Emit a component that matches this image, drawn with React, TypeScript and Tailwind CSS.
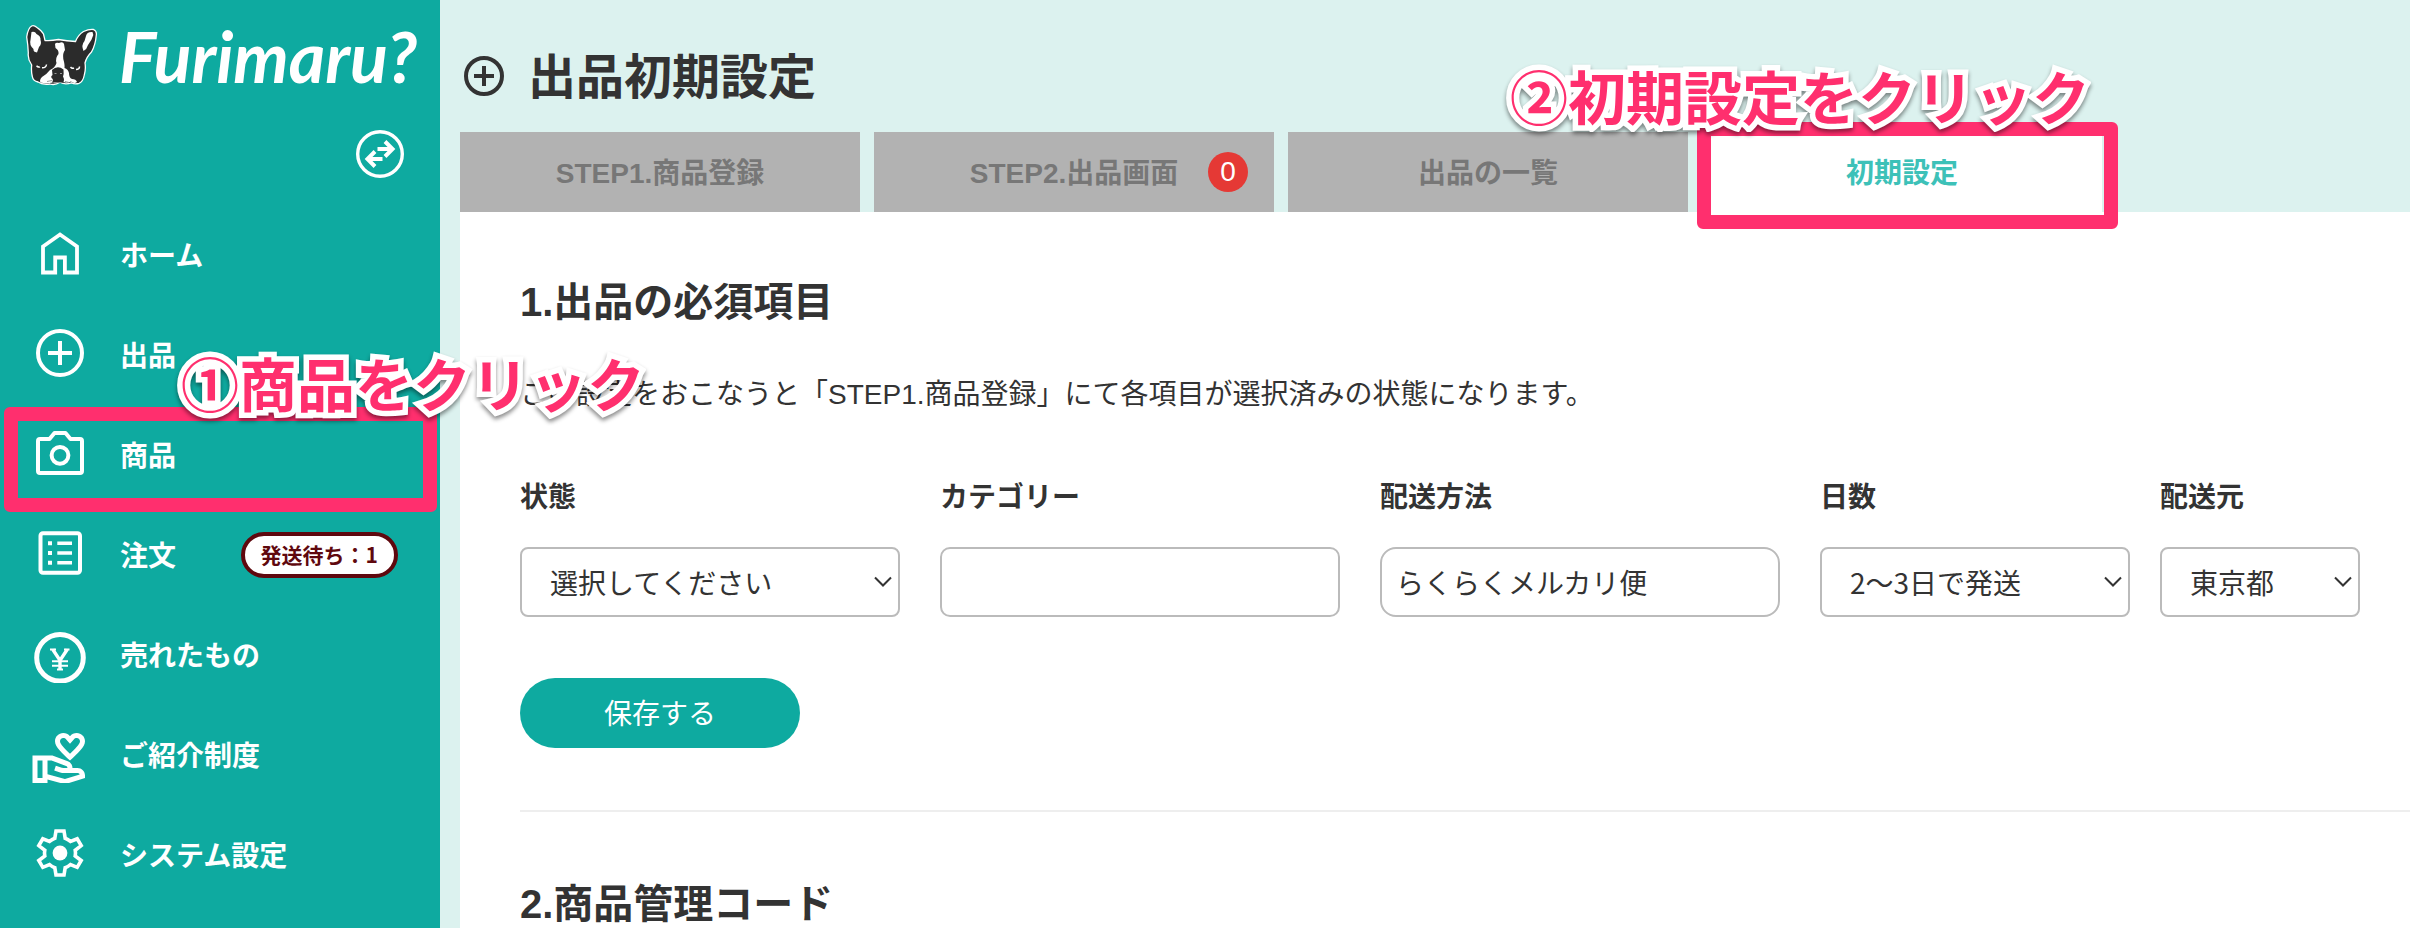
import type { ReactNode } from 'react'
import { MdOutlineVolunteerActivism } from 'react-icons/md'

const ICON_CLASS = 'size-[60px] flex-none fill-none stroke-white'

function HomeIcon() {
  return (
    <svg viewBox="0 0 60 60" className={ICON_CLASS} strokeWidth="3.800" aria-hidden="true">
      <path d="M13 23.500 30 11.500 47 23.500V49.500H34.900V34.500H25.200V49.500H13Z" />
    </svg>
  )
}

function PlusIcon() {
  return (
    <svg viewBox="0 0 60 60" className={ICON_CLASS} strokeWidth="4" aria-hidden="true">
      <circle cx="30" cy="30" r="22" />
      <path d="M30 18V42M18 30H42" />
    </svg>
  )
}

function CameraIcon() {
  return (
    <svg viewBox="0 0 60 60" className={ICON_CLASS} strokeWidth="4" strokeLinejoin="round" aria-hidden="true">
      <path d="M10 16H19.500L24.500 10H35.500L40.500 16H50Q52 16 52 18V48Q52 50 50 50H10Q8 50 8 48V18Q8 16 10 16Z" />
      <circle cx="30" cy="32.300" r="8.400" />
    </svg>
  )
}

function ListIcon() {
  return (
    <svg viewBox="0 0 60 60" className={ICON_CLASS} strokeWidth="4" aria-hidden="true">
      <rect x="10.500" y="10.200" width="39.500" height="39.500" rx="2.500" />
      <path d="M27.300 20.200H42M27.300 30H42M27.300 39.700H42" strokeWidth="3.600" />
      <path d="M18 20.200H22M18 30H22M18 39.700H22" />
    </svg>
  )
}

function YenIcon() {
  return (
    <svg viewBox="0 0 60 60" className={ICON_CLASS} strokeWidth="5" aria-hidden="true">
      <circle cx="30" cy="34.800" r="23.300" />
      <path d="M22.800 26.500 30 37.500 37.200 26.500M30 37V47" strokeWidth="3.400" />
      <path d="M20 26.600H26M34 26.600H39.500M22 38.300H38M22 42.800H38M27 46.500H33" strokeWidth="2" />
    </svg>
  )
}

function GearIcon() {
  return (
    <svg viewBox="0 0 60 60" className={ICON_CLASS} strokeWidth="3.600" aria-hidden="true">
      <path d="M26 8H34L35.200 15.300Q38 16.300 40.500 18.500L47.200 15.800 51.200 22.600 45.200 27.200Q45.800 30 45.200 33L51.200 37.500 47.200 44.300 40.500 41.500Q38 43.700 35.200 44.700L34 52H26L24.800 44.700Q22 43.700 19.500 41.500L12.800 44.300 8.800 37.500 14.800 33Q14.200 30 14.800 27.200L8.800 22.600 12.800 15.800 19.500 18.500Q22 16.300 24.800 15.300Z" />
      <circle cx="30" cy="30" r="7.400" className="fill-white stroke-none" />
    </svg>
  )
}

function DogLogo() {
  return (
    <svg viewBox="0 0 74 62" className="h-[62px] w-[74px] flex-none" aria-hidden="true">
      <path
        d="M6.700 1Q9 0 12 2.500Q17 6 18.500 9L20 15.500Q26 16 33.500 14.500Q42 16 50.500 16.500Q53 10 58.500 6.500Q64 4 68.500 4.500Q72 6 71.300 10Q70.500 20 66.500 27Q61.500 32 60 38Q61 44 59.300 50Q58 57 54 58.300Q50 59.500 46.500 57.800Q40 60 35 57.300Q30 60.500 25 59Q17 60 13 57Q8 56 7.300 51.500Q6 46 6.700 40Q2.500 34 3.300 28Q3 20 1.700 12Q3 3 6.700 1Z"
        fill="#2b2b2b"
        stroke="#fff"
        strokeWidth="1.300"
      />
      <path d="M6.500 7Q10 6 11.500 9Q16 11 15.500 15Q17 19 14 22L12 27.500Q8 27 8.500 24Q4 20 5.500 15Z" fill="#fff" />
      <path d="M67.500 7Q62 6.500 61 11L59.500 16Q56 20 58.500 26Q62 24 63 20Q67 15 68.300 10Z" fill="#fff" />
      <path
        d="M30 19Q31 17 34 18Q38 16 39 19L40 25Q37.500 28 38.300 34Q40 40 39.500 43Q43 44 44 48Q44 53 47 54Q51 54 52 57Q49 59 46 56.500Q41 59 37 56Q32 59 28 57.500Q21 59 15.500 57.500Q14 55 17 52Q21 50 25 45Q30 43 31.500 38Q30 33 33.500 29Q34 25 30.500 23Z"
        fill="#fff"
      />
      <path d="M27 45Q32.500 40 38.500 44.500Q39 49 38 51.500Q40 55 38 57.500H27Q29 54 26.500 53Q25.500 51 27.500 50Z" fill="#2b2b2b" />
      <path d="M29.500 48.500H31.500M35 48.500H37M22 56.500 27 55.500M40 56.500 44 57.500" fill="none" stroke="#999" strokeWidth="1" />
      <path d="M11.500 41Q14 42.500 15 42M17 42.800Q21 43 21.500 39.500M45.500 42Q47 44 49 43M51 44.500Q54.500 44.500 54.500 41.500" fill="none" stroke="#fff" strokeWidth="1.500" />
    </svg>
  )
}

function SwapIcon() {
  return (
    <svg viewBox="0 0 48 48" className="size-12 fill-none stroke-white" aria-hidden="true">
      <circle cx="24" cy="24" r="22.300" strokeWidth="3.400" />
      <path d="M21.500 19H37M29 11.500 36.500 19 29 26.500M26.500 29H11M19 21.500 11.500 29 19 36.500" strokeWidth="4" />
    </svg>
  )
}

const NAV_ITEMS: Array<{ label: string; icon: ReactNode; badge?: string; marked?: boolean }> = [
  { label: 'ホーム', icon: <HomeIcon /> },
  { label: '出品', icon: <PlusIcon /> },
  { label: '商品', icon: <CameraIcon />, marked: true },
  { label: '注文', icon: <ListIcon />, badge: '発送待ち：1' },
  { label: '売れたもの', icon: <YenIcon /> },
  {
    label: 'ご紹介制度',
    icon: <MdOutlineVolunteerActivism viewBox="0 -2 24 24" className="size-[60px] flex-none" aria-hidden="true" />,
  },
  { label: 'システム設定', icon: <GearIcon /> },
]

const TABS: Array<{ label: string; count?: number; active?: boolean }> = [
  { label: 'STEP1.商品登録' },
  { label: 'STEP2.出品画面', count: 0 },
  { label: '出品の一覧' },
  { label: '初期設定', active: true },
]

// Pink guide text with a white outline
function Callout({ text, className }: { text: string; className: string }) {
  return (
    <p
      className={`pointer-events-none absolute z-30 font-['Liberation_Sans','Noto_Sans_CJK_JP',sans-serif] text-[58px] leading-[64px] font-bold whitespace-nowrap text-[#ff2f6e] drop-shadow-[0_3px_2px_rgba(0,0,0,0.45)] [-webkit-text-stroke:11px_white] [paint-order:stroke_fill] [stroke-linejoin:round] ${className}`}
    >
      {text}
    </p>
  )
}

function Sidebar() {
  return (
    <aside className="w-[440px] flex-none bg-[#0eaaa0] font-['Noto_Sans_CJK_JP',sans-serif] text-white">
      <a href="#" className="flex items-center gap-5 pt-[22px] pl-[25px]">
        <DogLogo />
        <span className="font-['Lato'] text-[70px] leading-[68px] font-bold italic">Furimaru?</span>
      </a>
      <div className="flex justify-end pt-10 pr-9">
        <button type="button" aria-label="メニュー切替">
          <SwapIcon />
        </button>
      </div>
      <nav className="pt-[25px]">
        <ul>
          {NAV_ITEMS.map((item) => (
            <li key={item.label} className="relative">
              <a href="#" className="flex h-[100px] items-center pl-[30px]">
                {item.icon}
                <span className="pt-[2px] pl-[30px] text-[28px] font-bold">{item.label}</span>
                {item.badge && (
                  <span className="mt-1 mr-[42px] ml-auto flex h-[46px] items-center rounded-full border-4 border-[#5f080e] bg-white px-4 text-[21px] font-bold text-[#5f080e]">
                    {item.badge}
                  </span>
                )}
              </a>
              {item.marked && (
                <>
                  <span className="pointer-events-none absolute top-1 right-[3px] -bottom-[9px] left-1 z-20 rounded-[6px] border-[14px] border-[#ff2f6e]" />
                  <Callout text="①商品をクリック" className="-top-12 left-[181px]" />
                </>
              )}
            </li>
          ))}
        </ul>
      </nav>
    </aside>
  )
}

function Tabs() {
  return (
    <div role="tablist" className="flex gap-[14px]">
      {TABS.map((tab) => (
        <div key={tab.label} className="relative w-[400px]">
          <button
            type="button"
            role="tab"
            aria-selected={!!tab.active}
            className={`h-20 w-full pt-1 text-[28px] font-bold ${
              tab.active ? 'bg-white text-[#3dc1b8]' : 'bg-[#b2b2b2] text-[#777777]'
            }`}
          >
            {tab.label}
          </button>
          {tab.count !== undefined && (
            <span className="absolute top-5 right-[26px] flex size-10 items-center justify-center rounded-full bg-[#e53935] text-[28px] text-white">
              {tab.count}
            </span>
          )}
          {tab.active && (
            <>
              <span className="pointer-events-none absolute -top-[10px] -right-4 -bottom-[17px] -left-[5px] z-20 rounded-[6px] border-[14px] border-[#ff2f6e]" />
              <Callout text="②初期設定をクリック" className="-top-16 right-3" />
            </>
          )}
        </div>
      ))}
    </div>
  )
}

const FIELD_CLASS =
  "h-[70px] w-full border-2 border-[#bbbbbb] bg-white font-['Noto_Sans_CJK_JP',sans-serif] text-[28px] text-[#333333]"

function Field({ id, label, className, children }: { id: string; label: string; className: string; children: ReactNode }) {
  return (
    <div className={`flex flex-col gap-[29px] ${className}`}>
      <label htmlFor={id} className="text-[28px] leading-10 font-bold">
        {label}
      </label>
      {children}
    </div>
  )
}

function SelectBox({ id, value }: { id: string; value: string }) {
  return (
    <div className="relative">
      <select id={id} defaultValue={value} className={`${FIELD_CLASS} appearance-none rounded-lg pl-7`}>
        <option value={value}>{value}</option>
      </select>
      <svg
        viewBox="0 0 18 12"
        className="pointer-events-none absolute top-[29px] right-2 h-3 w-[18px] fill-none stroke-[#333333]"
        strokeWidth="2"
        aria-hidden="true"
      >
        <path d="M1 1.500 9 9.500 17 1.500" />
      </svg>
    </div>
  )
}

export default function App() {
  return (
    <div className="flex h-screen overflow-hidden bg-[#dcf2ef] font-['Liberation_Sans','Noto_Sans_CJK_JP',sans-serif] text-[#333333]">
      <Sidebar />
      <div className="flex min-w-0 flex-1 flex-col pl-5">
        <header className="flex items-center gap-6 pt-10 pb-5 pl-1">
          <svg viewBox="0 0 40 40" className="size-10 fill-none stroke-[#333333]" strokeWidth="4" aria-hidden="true">
            <circle cx="20" cy="20" r="18" />
            <path d="M20 10V30M10 20H30" />
          </svg>
          <h1 className="pt-1 text-[48px] leading-[68px] font-bold">出品初期設定</h1>
        </header>
        <Tabs />
        <main className="flex-1 bg-white pl-[60px]">
          <section className="border-b-2 border-[#eeeeee] pt-[68px] pb-[62px]">
            <h2 className="text-[40px] leading-[44px] font-bold">1.出品の必須項目</h2>
            <p className="pt-[50px] text-[28px] leading-[42px]">
              この設定をおこなうと「STEP1.商品登録」にて各項目が選択済みの状態になります。
            </p>
            <form onSubmit={(e) => e.preventDefault()}>
              <div className="flex gap-10 pt-[62px]">
                <Field id="condition" label="状態" className="w-[380px]">
                  <SelectBox id="condition" value="選択してください" />
                </Field>
                <Field id="category" label="カテゴリー" className="w-[400px]">
                  <input id="category" type="text" className={`${FIELD_CLASS} rounded-[10px] px-4`} />
                </Field>
                <Field id="shipping" label="配送方法" className="w-[400px]">
                  <input
                    id="shipping"
                    type="text"
                    defaultValue="らくらくメルカリ便"
                    className={`${FIELD_CLASS} rounded-2xl px-[14px]`}
                  />
                </Field>
                <div className="flex gap-[30px]">
                  <Field id="days" label="日数" className="w-[310px]">
                    <SelectBox id="days" value="2〜3日で発送" />
                  </Field>
                  <Field id="origin" label="配送元" className="w-[200px]">
                    <SelectBox id="origin" value="東京都" />
                  </Field>
                </div>
              </div>
              <button
                type="submit"
                className="mt-[61px] h-[70px] w-[280px] rounded-full bg-[#0eaaa0] pt-1 text-[28px] text-white"
              >
                保存する
              </button>
            </form>
          </section>
          <section className="pt-[70px]">
            <h2 className="text-[40px] leading-[44px] font-bold">2.商品管理コード</h2>
          </section>
        </main>
      </div>
    </div>
  )
}
